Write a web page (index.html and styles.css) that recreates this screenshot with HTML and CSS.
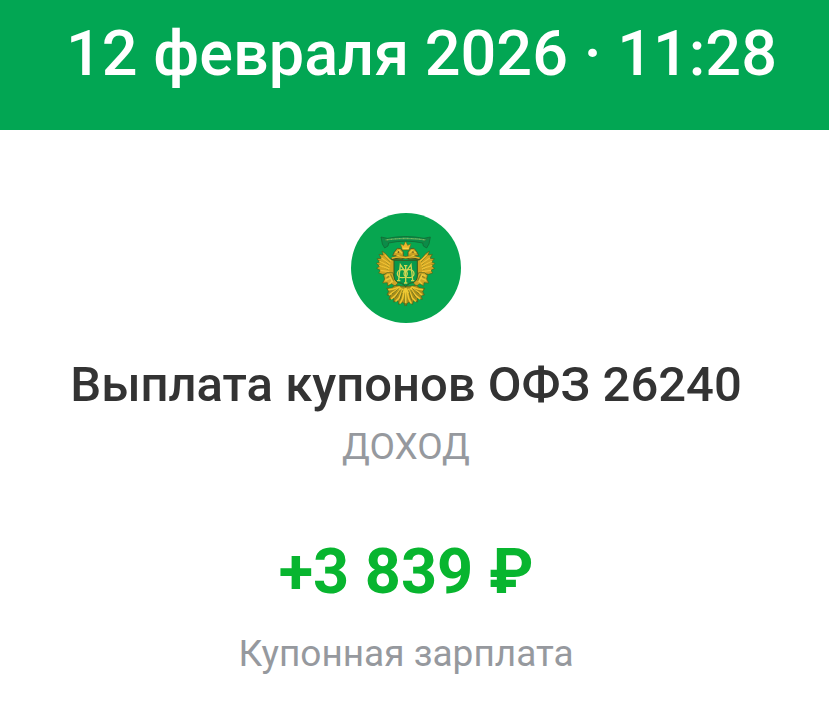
FILE: index.html
```html
<!DOCTYPE html>
<html lang="ru">

<head>
    <meta charset="UTF-8">
    <meta name="viewport" content="width=device-width, initial-scale=1.0">
    <title>Выплата купонов ОФЗ 26240</title>
    <link rel="stylesheet" href="styles.css">
</head>

<body>
    <header class="header">
        <time class="date" datetime="2026-02-12T11:28">12 февраля 2026 · 11:28</time>
    </header>
    <main class="operation">
        <!-- герб: лента, двуглавый орёл, щит с монограммой -->
        <svg class="logo" viewBox="33 24 330 330" aria-hidden="true">
            <defs>
                <g id="wing">
                    <path d="M165 168 L150 162 L137 146 L126 138 L129 150 L117 148 L124 160 L111 161 L119 171 L109 175 L118 184 L110 190 L121 196 L116 204 L128 208 L142 206 L163 208 Z" fill="#d0a322" stroke="#3f651d" stroke-width="2" />
                    <path d="M130 149 L151 171 M120 154 L148 179 M116 165 L147 187 M114 177 L145 194" fill="none" stroke="#6f7a1c" stroke-width="2" />
                    <path d="M134 150 L154 169 M124 158 L151 178 M118 168 L149 185 M118 181 L148 192 M121 196 L148 200" fill="none" stroke="#f0c034" stroke-width="4" />
                    <!-- голова -->
                    <path d="M189 163 L160 163 L168 152 L158 152 L163 141 L172 130 L182 131 L190 141 L190 150 Z" fill="#c89f22" stroke="#454a1b" stroke-width="2" />
                    <path d="M166 144 L178 136 L186 145 M172 151 L185 155" fill="none" stroke="#edc939" stroke-width="4" />
                    <circle cx="175" cy="141" r="2" fill="#303418" />
                    <!-- лапа -->
                    <path d="M141 203 L158 203 L165 221 L174 234 L165 243 L154 236 L143 243 L142 233 L128 234 L134 222 L131 211 Z" fill="#cfa626" stroke="#4d651b" stroke-width="2" />
                    <path d="M146 207 L158 232 M136 226 L150 220 M148 237 L156 229 M137 214 L144 209" fill="none" stroke="#edca3b" stroke-width="4" />
                    <path d="M152 208 L161 227 M140 218 L148 214" fill="none" stroke="#576a1b" stroke-width="2" />
                    <!-- хвост -->
                    <path d="M197 244 L181 243 L165 241 L154 249 L140 250 L146 259 L141 270 L151 271 L147 283 L162 280 L161 291 L174 287 L176 298 L188 292 L200 302 Z" fill="#a58d1d" stroke="#45601b" stroke-width="2" />
                    <path d="M178 246 L160 252 L147 254 M180 249 L160 261 L149 269 M183 251 L166 272 L155 281 M188 253 L177 279 L168 288 M194 252 L188 280 L181 294" fill="none" stroke="#f0c52f" stroke-width="5" stroke-linecap="round" stroke-linejoin="round" />
                    <path d="M178 250 L156 267 M182 254 L166 278 M188 256 L179 286" fill="none" stroke="#506119" stroke-width="2" />
                </g>
            </defs>
            <circle cx="198" cy="189" r="165" fill="#07a650" />
            <use href="#wing" />
            <use href="#wing" transform="translate(394 0) scale(-1 1)" />
            <!-- корона -->
            <path d="M187 135 L181 116 L191 121 L197 108 L203 121 L213 116 L207 135 Z" fill="#efb62c" stroke="#56701d" stroke-width="2" />
            <path d="M188 130 H206" fill="none" stroke="#f6d447" stroke-width="4" />
            <!-- лента -->
            <path d="M144 123 L134 129 L127 117 L123 96 L142 100 Q197 89 252 100 L271 96 L267 117 L260 129 L250 123 L248 114 Q197 103 146 114 Z" fill="#0b8c48" stroke="#14602f" stroke-width="2" />
            <path d="M137 105 Q197 96 257 105" fill="none" stroke="#86b862" stroke-width="4" stroke-dasharray="3 1" />
            <path d="M127 99 L137 105 L146 114 M267 99 L257 105 L248 114" fill="none" stroke="#2a753b" stroke-width="2" />
            <!-- щит -->
            <path d="M162 166 H232 V214 Q232 232 209 235 L197 244 L185 235 Q162 232 162 214 Z" fill="#08994b" stroke="#355b22" stroke-width="3" />
            <path d="M154 162 Q176 153 197 158 Q218 153 240 162" fill="none" stroke="#4b501a" stroke-width="8" />
            <path d="M155 160 Q176 152 197 158 Q218 152 239 160" fill="none" stroke="#dfb72d" stroke-width="5" />
            <!-- монограмма -->
            <g fill="none" stroke="#d0d552" stroke-width="4">
                <path d="M171 227 H181 M176 226 L181 179 L197 202 L213 179 L218 226 M213 227 H223" />
                <path d="M197 182 V235 M192 182 H202 M192 234 H202" />
                <ellipse cx="187" cy="206" rx="15" ry="12" />
                <ellipse cx="207" cy="206" rx="15" ry="12" />
            </g>
            <path d="M197 248 V294 M189 264 L197 252 L205 264" fill="none" stroke="#edc934" stroke-width="5" />
        </svg>
        <h1 class="title">Выплата купонов ОФЗ 26240</h1>
        <p class="type">ДОХОД</p>
        <p class="amount">+3 839 ₽</p>
        <p class="comment">Купонная зарплата</p>
    </main>
</body>

</html>
```
FILE: styles.css
```css
body {
    margin: 0;
    background-color: #fff;
    font-family: Roboto, "Liberation Sans", sans-serif;
    text-align: center;
}

.header {
    padding: 18px 0 40px 14px;
    background-color: #02a653;
    color: #fff;
}

.date {
    display: block;
    font-size: 63px;
    font-weight: 500;
    line-height: 72px;
}

.operation {
    display: flex;
    flex-direction: column;
    align-items: center;
    padding: 83px 17px 32px 0;
}

.logo {
    width: 110px;
    height: 110px;
    margin-bottom: 32px;
}

.title {
    margin: 0 0 8px;
    color: #333;
    font-size: 49px;
    font-weight: 500;
    line-height: 60px;
}

.type,
.comment {
    margin: 0;
    color: #96999e;
    font-size: 37px;
    line-height: 48px;
}

.amount {
    margin: 65px 0 22px;
    color: #08b52f;
    font-size: 63px;
    font-weight: 700;
    line-height: 72px;
}
```
